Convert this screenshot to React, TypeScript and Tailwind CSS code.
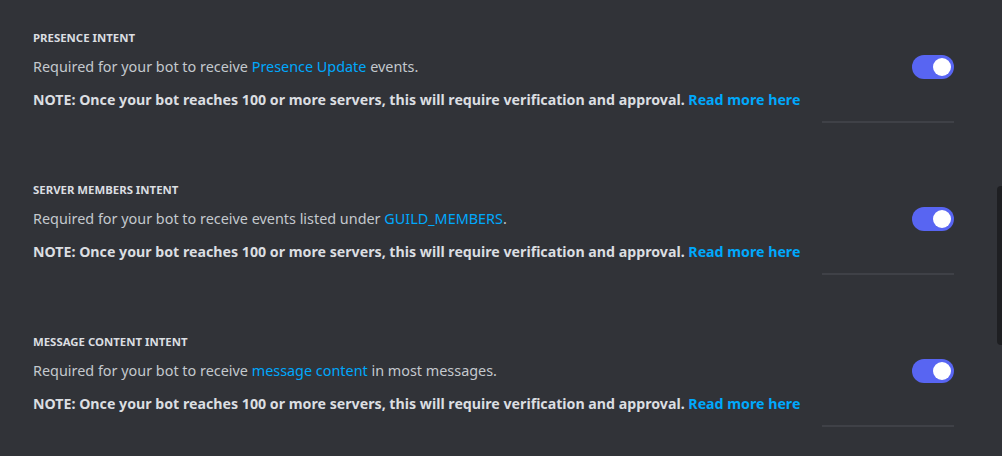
const intents = [
  {
    title: 'PRESENCE INTENT',
    before: 'Required for your bot to receive ',
    link: 'Presence Update',
    after: ' events.',
  },
  {
    title: 'SERVER MEMBERS INTENT',
    before: 'Required for your bot to receive events listed under ',
    link: 'GUILD_MEMBERS',
    after: '.',
  },
  {
    title: 'MESSAGE CONTENT INTENT',
    before: 'Required for your bot to receive ',
    link: 'message content',
    after: ' in most messages.',
  },
]

function Toggle() {
  return (
    <div className="flex h-[24px] w-[42px] shrink-0 items-center justify-end rounded-full bg-[#5865f2] px-[3px]">
      <div className="h-[18px] w-[18px] rounded-full bg-white" />
    </div>
  )
}

export default function App() {
  return (
    <div className="relative h-[456px] w-[1002px] overflow-hidden bg-[#313338] font-['Noto_Sans',sans-serif]">
      <div className="flex w-[954px] flex-col pl-[33px] pt-[30px]">
        {intents.map((it) => (
          <section key={it.title} className="mb-[59px] flex flex-col">
            <h2 className="text-[11.4px] font-bold leading-[16px] text-[#dbdee1]">{it.title}</h2>
            <div className="mt-[9px] flex items-start justify-between">
              <p className="pt-[2px] text-[14.4px] leading-[20px] text-[#c4c9ce]">
                {it.before}
                <span className="text-[#00a8fc]">{it.link}</span>
                {it.after}
              </p>
              <Toggle />
            </div>
            <p className="mt-[12px] text-[14.2px] font-bold leading-[18px] text-[#dbdee1]">
              NOTE: Once your bot reaches 100 or more servers, this will require verification and
              approval. <span className="text-[#00a8fc]">Read more here</span>
            </p>
            <div className="mt-[12px] flex justify-end">
              <div className="h-[2px] w-[132px] bg-[#3f4147]" />
            </div>
          </section>
        ))}
      </div>
      <div className="absolute right-0 top-[186px] h-[159px] w-[5px] rounded-l-[4px] bg-[#1e1f22]" />
    </div>
  )
}
